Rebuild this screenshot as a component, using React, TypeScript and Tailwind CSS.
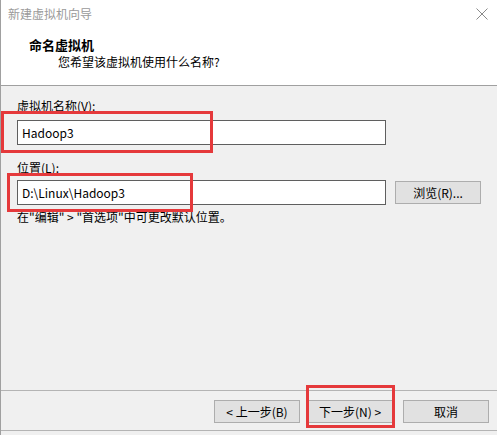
import React from "react";

const font = {
  fontFamily: '"Noto Sans CJK SC", "Noto Sans", sans-serif',
};

const WinButton = ({ label, className }: { label: string; className?: string }) => (
  <div
    className={
      "h-[23px] w-[86px] flex items-center justify-center bg-[#e1e1e1] border border-[#adadad] text-[12px] leading-[16px] text-black " +
      (className || "")
    }
  >
    {label}
  </div>
);

const App = () => {
  return (
    <div
      className="relative w-[497px] h-[435px] overflow-hidden bg-[#f0f0f0] border-l border-[#a0a0a0] flex flex-col"
      style={font}
    >
      {/* header */}
      <div className="h-[86px] bg-white border-b border-[#a0a0a0] shrink-0">
        <div className="flex items-start justify-between pl-[7px] pr-[9px] pt-[6px]">
          <div className="text-[12px] leading-[16px] text-[#9a9a9a]">新建虚拟机向导</div>
          <svg width="12" height="12" viewBox="0 0 12 12" className="mt-[2px]">
            <path d="M0.5 0.5 L11.5 11.5 M11.5 0.5 L0.5 11.5" stroke="#8a8a8a" strokeWidth="1" />
          </svg>
        </div>
        <div className="pl-[28px] mt-[14px] text-[13px] leading-[17px] font-bold text-black">
          命名虚拟机
        </div>
        <div className="pl-[57px] text-[12px] leading-[17px] text-black">
          您希望该虚拟机使用什么名称?
        </div>
      </div>

      {/* body */}
      <div className="flex-1 px-[16px] pt-[12px] text-[12px] leading-[16px] text-black">
        <div>虚拟机名称(V):</div>
        <div className="mt-[6px] w-[369px] h-[25px] bg-white border border-[#5f5f5f] flex items-center pl-[4px]">
          Hadoop3
        </div>
        <div className="mt-[15px]">位置(L):</div>
        <div className="mt-[4px] flex items-center">
          <div className="w-[369px] h-[25px] bg-white border border-[#5f5f5f] flex items-center pl-[4px]">
            D:\Linux\Hadoop3
          </div>
          <WinButton label="浏览(R)..." className="ml-[9px]" />
        </div>
        <div className="mt-[4px]">在"编辑" &gt; "首选项"中可更改默认位置。</div>
      </div>

      {/* footer */}
      <div className="h-[41px] shrink-0 border-t border-b border-[#b4b4b4] flex items-start pt-[9px]">
        <WinButton label="< 上一步(B)" className="ml-[213px]" />
        <WinButton label="下一步(N) >" className="ml-[7px]" />
        <WinButton label="取消" className="ml-[10px]" />
      </div>
      <div className="h-[4px] shrink-0" />

      {/* red annotation boxes */}
      <div className="absolute left-[0px] top-[111px] w-[212px] h-[42px] border-[3px] border-[#e5393b]" />
      <div className="absolute left-[6px] top-[173px] w-[186px] h-[39px] border-[3px] border-[#e5393b]" />
      <div className="absolute left-[305px] top-[385px] w-[89px] h-[43px] border-[3px] border-[#e5393b]" />
    </div>
  );
};

export default App;
